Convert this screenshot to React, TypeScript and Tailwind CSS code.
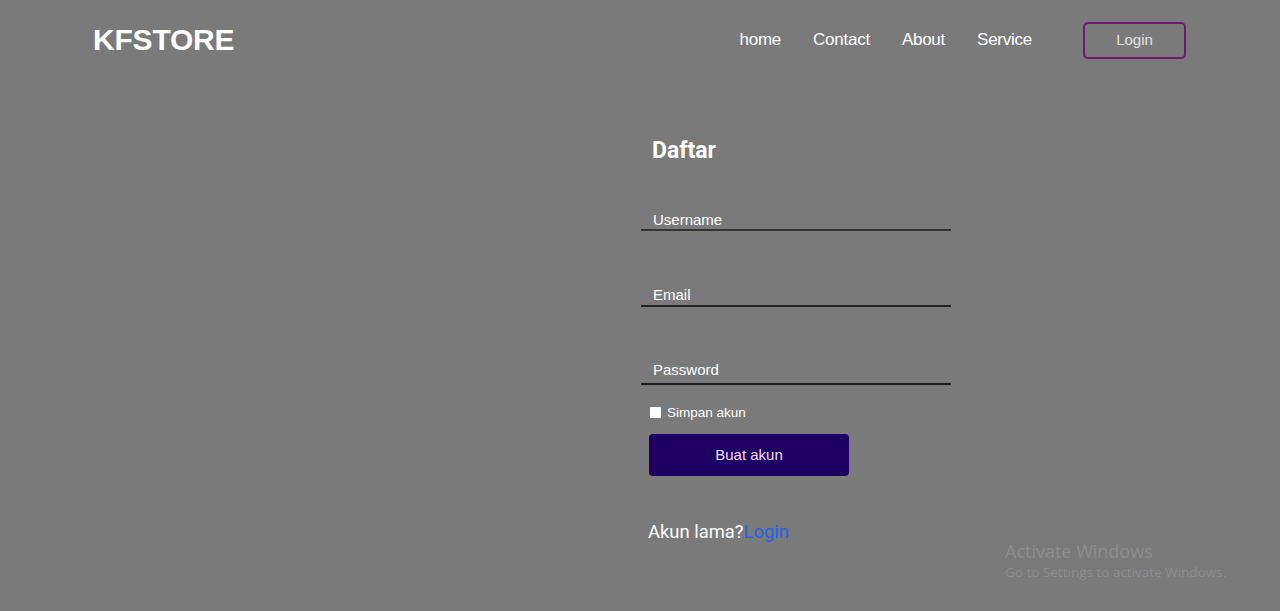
import React from "react";

export default function App() {
  const arial = { fontFamily: '"Liberation Sans", Arial, sans-serif' };
  const roboto = { fontFamily: 'Roboto, "Liberation Sans", sans-serif' };
  return (
    <div className="relative w-full h-[611px] bg-[#7a7a7a] overflow-hidden text-white">
      <header className="flex items-center justify-between pl-[93px] pr-[94px] h-[80px]">
        <div className="text-[30px] font-bold text-white -tracking-[0.2px] -mt-[1px]" style={arial}>
          KFSTORE
        </div>
        <nav className="flex items-center" style={arial}>
          <a className="text-[17px] text-white mr-[32px] -tracking-[0.25px]">home</a>
          <a className="text-[17px] text-white mr-[32px] -tracking-[0.25px]">Contact</a>
          <a className="text-[17px] text-white mr-[32px] -tracking-[0.25px]">About</a>
          <a className="text-[17px] text-white mr-[51px] -tracking-[0.25px]">Service</a>
          <button className="w-[103px] h-[37px] border-2 border-[#6e1a72] rounded-[5px] text-[15px] text-[#e2e2e2] flex items-center justify-center" style={arial}>
            Login
          </button>
        </nav>
      </header>

      <main className="grid grid-cols-[641px_1fr]">
        <div />
        <div className="w-[310px] flex flex-col">
          <h1 className="text-[23px] font-bold text-white ml-[11px] mt-[57px] leading-[28px]" style={roboto}>
            Daftar
          </h1>
          <div className="mt-[40px] h-[26px] flex items-end border-b-[2px] border-[#333333]">
            <span className="pl-[12px] pb-[1px] text-[15px] text-white leading-[17px]" style={arial}>Username</span>
          </div>
          <div className="mt-[48px] h-[28px] flex items-end border-b-[2px] border-[#222222]">
            <span className="pl-[12px] pb-[2px] text-[15px] text-white leading-[17px]" style={arial}>Email</span>
          </div>
          <div className="mt-[48px] h-[30px] flex items-end border-b-[2px] border-[#1c1c1c]">
            <span className="pl-[12px] pb-[5px] text-[15px] text-white leading-[17px]" style={arial}>Password</span>
          </div>
          <label className="mt-[21px] ml-[9px] flex items-center h-[14px]" style={arial}>
            <span className="w-[11px] h-[11px] bg-white rounded-[1px] mr-[6px] -mt-[1px]" />
            <span className="text-[13.5px] text-white leading-[14px]">Simpan akun</span>
          </label>
          <button
            className="mt-[14px] ml-[8px] w-[200px] h-[42px] bg-[#1f0062] rounded-[4px] text-[15px] text-[#f3dcee] flex items-center justify-center"
            style={arial}
          >
            Buat akun
          </button>
          <p className="mt-[44px] ml-[7px] text-[18.4px] text-white leading-[24px]" style={roboto}>
            Akun lama?<a className="text-[#2463eb]">Login</a>
          </p>
        </div>
      </main>

      <div className="absolute left-[1005px] top-[540px] text-[#8e8e8e]" style={{ fontFamily: '"Open Sans", "Noto Sans", sans-serif' }}>
        <div className="text-[18px] leading-[22px]">Activate Windows</div>
        <div className="text-[13.5px] leading-[18px] mt-[1px]">Go to Settings to activate Windows.</div>
      </div>
    </div>
  );
}
